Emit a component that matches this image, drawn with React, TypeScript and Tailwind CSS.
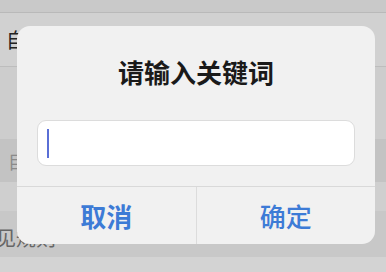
export default function App() {
  return (
    <div
      className="relative h-[272px] w-[386px] overflow-hidden bg-[#cbcbcb]"
      style={{ fontFamily: '"Noto Sans CJK SC", "Noto Sans", sans-serif' }}
    >
      {/* page behind the dim overlay */}
      <div className="flex flex-col">
        <div className="h-[13px] border-b border-[#b9b9b9] bg-[#c9c9c9]" />
        <div className="flex h-[54px] items-center border-b border-[#bdbdbd] bg-[#d1d1d1] pl-[6px]">
          <span className="text-[20px] leading-none text-[#222]">自定义</span>
        </div>
        <div className="h-[72px] bg-[#cdcdcd]" />
        <div className="flex h-[43px] items-center bg-[#c3c3c3] pl-[8px]">
          <span className="text-[18px] leading-none text-[#8a8a8a]">目标</span>
        </div>
        <div className="h-[29px] bg-[#cfcfcf]" />
        <div className="flex h-[46px] items-end bg-[#c8c8c8] pb-[9px] pl-[0px]">
          <span className="-ml-[4px] text-[20px] leading-none text-[#666]">见规则</span>
        </div>
        <div className="h-[15px] bg-[#d3d3d3]" />
      </div>

      {/* dialog */}
      <div className="absolute left-[17px] top-[26px] flex h-[218px] w-[358px] flex-col rounded-[13px] bg-[#f1f1f1]">
        <div className="pt-[33px] text-center text-[26px] font-bold leading-[26px] text-[#1a1a1a]">
          请输入关键词
        </div>
        <div className="mx-[20px] mt-[35px] flex h-[46px] items-center rounded-[9px] border border-[#dcdcdc] bg-white pl-[9px]">
          <div className="h-[29px] w-[2px] bg-[#5a6fd6]" />
        </div>
        <div className="mt-[20px] flex flex-1 border-t border-[#d9d9d9]">
          <div className="flex flex-1 items-center justify-center border-r border-[#dcdcdc] pb-[1px] text-[26px] font-bold text-[#3d7bd6]">
            取消
          </div>
          <div className="flex flex-1 items-center justify-center pb-[1px] text-[26px] font-medium text-[#3d7bd6]">
            确定
          </div>
        </div>
      </div>
    </div>
  );
}
